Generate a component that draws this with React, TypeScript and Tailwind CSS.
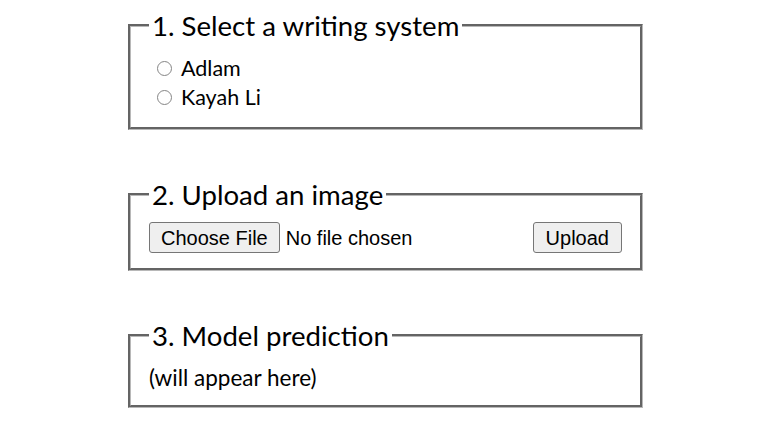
import React from "react";

const cal = { fontFamily: "Lato, 'Open Sans', sans-serif" };
const arial = { fontFamily: "'Liberation Sans', Arial, sans-serif" };

function Radio({ label }: { label: string }) {
  return (
    <label className="flex items-center h-[29px]">
      <span className="shrink-0 ml-[8px] w-[15px] h-[15px] rounded-full border border-[#858585] bg-white" />
      <span className="ml-[9px] text-[21.5px] leading-[29px] text-black">{label}</span>
    </label>
  );
}

function Box({ title, children, pb }: { title: string; children: React.ReactNode; pb: string }) {
  return (
    <fieldset className={`w-[515px] ml-[128px] border-[3px] [border-style:groove] border-[#b8b8b8] px-[18px] ${pb}`}>
      <legend className="px-[3px] text-[27.6px] leading-[31px] text-black" style={cal}>
        {title}
      </legend>
      {children}
    </fieldset>
  );
}

export default function App() {
  return (
    <div className="w-[776px] h-[431px] bg-white overflow-hidden pt-[10px]" style={cal}>
      <Box title="1. Select a writing system" pb="pb-[15px]">
        <div className="mt-[13px]">
          <Radio label="Adlam" />
          <Radio label="Kayah Li" />
        </div>
      </Box>
      <div className="h-[49px]" />
      <Box title="2. Upload an image" pb="pb-[15px]">
        <div className="mt-[12px] flex items-center justify-between">
          <div className="flex items-center">
            <button
              className="h-[31px] px-[11px] bg-[#efefef] border border-[#767676] rounded-[3px] text-[20px] text-black"
              style={arial}
            >
              Choose File
            </button>
            <span className="ml-[6px] text-[20px] text-black" style={arial}>
              No file chosen
            </span>
          </div>
          <button
            className="h-[31px] px-[12px] bg-[#efefef] border border-[#767676] rounded-[3px] text-[20px] text-black"
            style={arial}
          >
            Upload
          </button>
        </div>
      </Box>
      <div className="h-[49px]" />
      <Box title="3. Model prediction" pb="pb-[13px]">
        <div className="mt-[13px] text-[22.5px] leading-[28px] text-black">(will appear here)</div>
      </Box>
    </div>
  );
}
